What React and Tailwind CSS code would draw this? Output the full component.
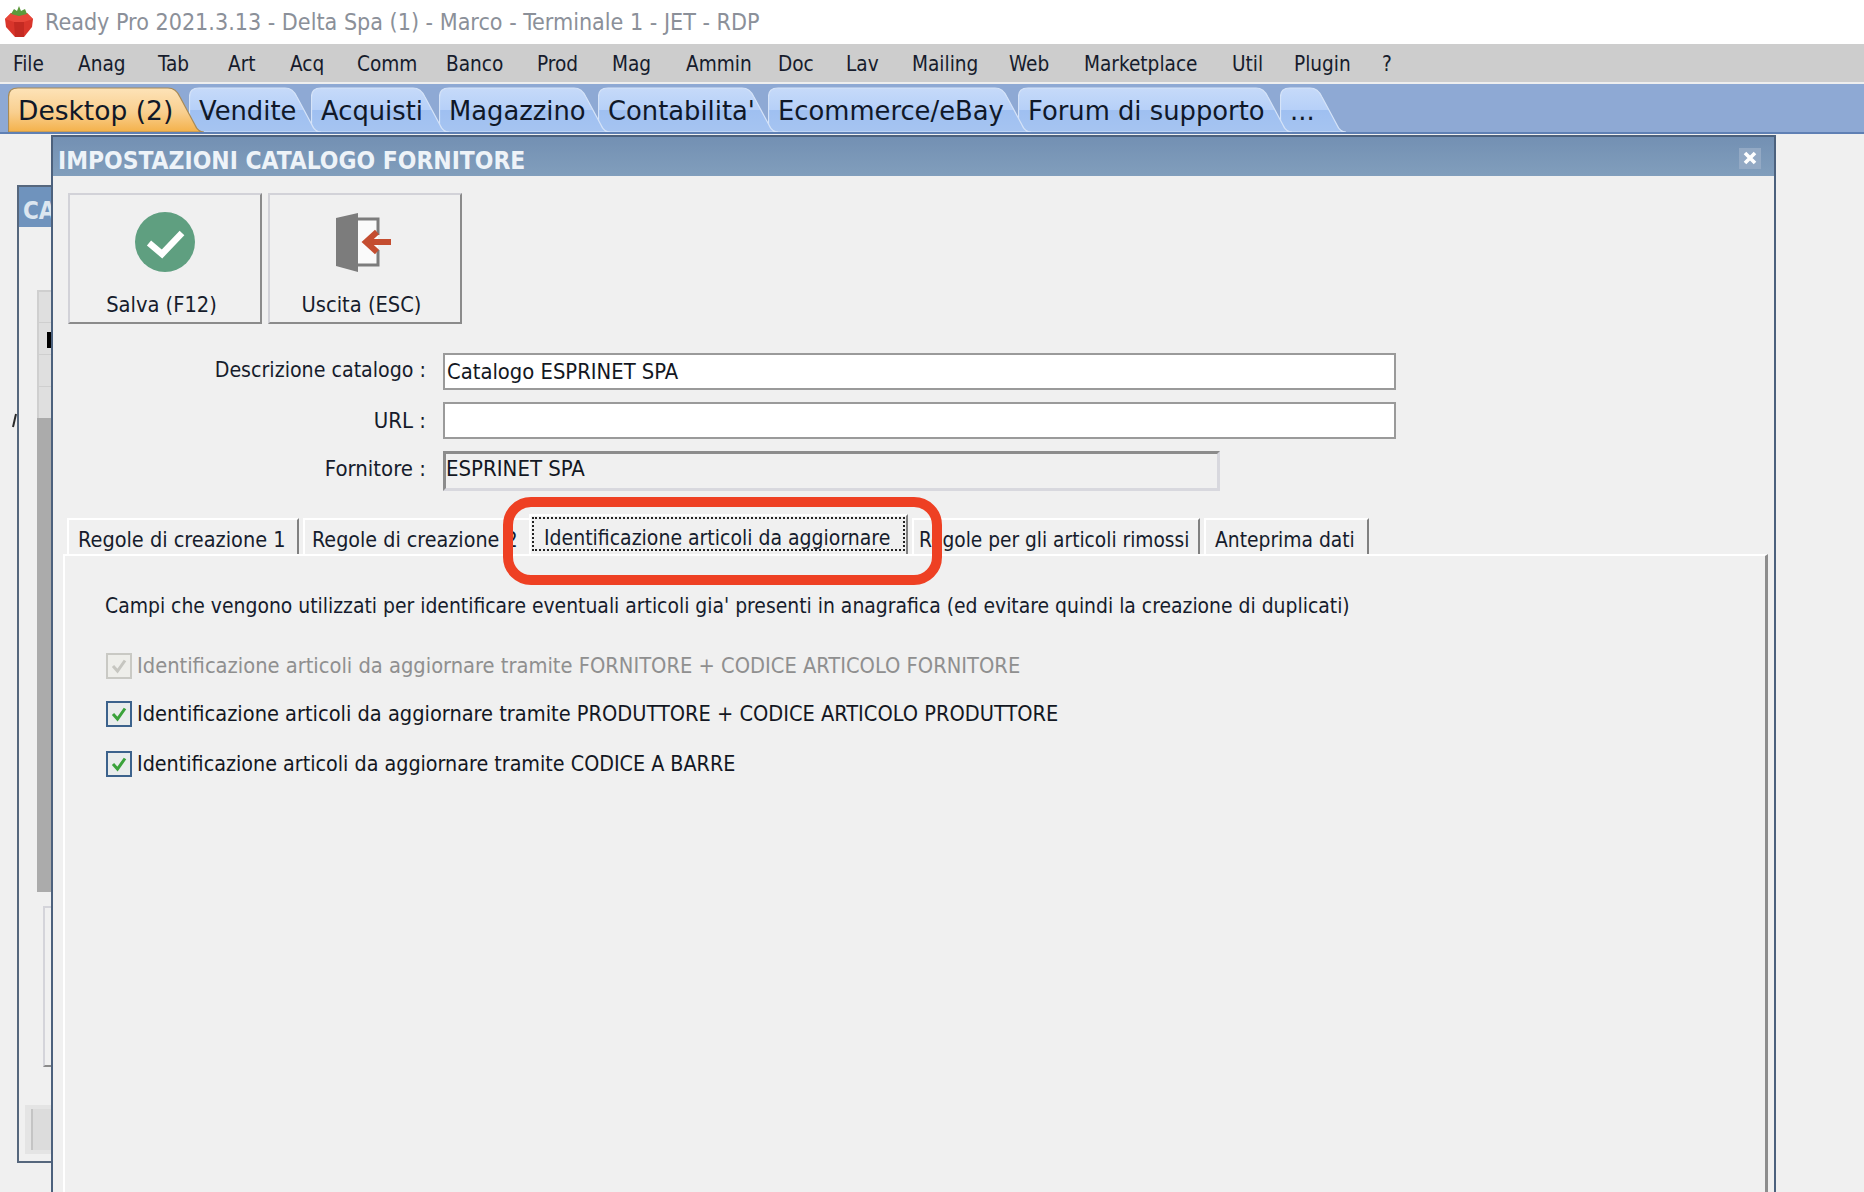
import React from 'react';

const sans = "font-['DejaVu_Sans_Condensed','DejaVu_Sans',sans-serif] font-stretch-condensed";

const menuItems = [
  { label: 'File', w: 'w-[65px]' },
  { label: 'Anag', w: 'w-[80px]' },
  { label: 'Tab', w: 'w-[70px]' },
  { label: 'Art', w: 'w-[62px]' },
  { label: 'Acq', w: 'w-[67px]' },
  { label: 'Comm', w: 'w-[89px]' },
  { label: 'Banco', w: 'w-[91px]' },
  { label: 'Prod', w: 'w-[75px]' },
  { label: 'Mag', w: 'w-[74px]' },
  { label: 'Ammin', w: 'w-[92px]' },
  { label: 'Doc', w: 'w-[68px]' },
  { label: 'Lav', w: 'w-[66px]' },
  { label: 'Mailing', w: 'w-[97px]' },
  { label: 'Web', w: 'w-[75px]' },
  { label: 'Marketplace', w: 'w-[148px]' },
  { label: 'Util', w: 'w-[62px]' },
  { label: 'Plugin', w: 'w-[88px]' },
  { label: '?', w: 'w-[20px]' },
];

// width is what the drawn shape needs, the rest stays in classes
const appTabs = [
  { label: 'Desktop (2)', width: 196, cls: 'w-[196px] ml-[8px] z-[8]', text: 'text-[26.5px]', active: true },
  { label: 'Vendite', width: 132, cls: 'w-[132px] -ml-[15px] z-[7]', text: 'text-[25.8px]' },
  { label: 'Acquisti', width: 138, cls: 'w-[138px] -ml-[10px] z-[6]', text: 'text-[25.8px]' },
  { label: 'Magazzino', width: 171, cls: 'w-[171px] -ml-[10px] z-[5]', text: 'text-[25.8px]' },
  { label: "Contabilita'", width: 180, cls: 'w-[180px] -ml-[12px] z-[4]', text: 'text-[25.8px]' },
  { label: 'Ecommerce/eBay', width: 263, cls: 'w-[263px] -ml-[10px] z-[3]', text: 'text-[25.8px]' },
  { label: 'Forum di supporto', width: 274, cls: 'w-[274px] -ml-[13px] z-[2]', text: 'text-[25.8px]' },
  { label: '...', width: 66, cls: 'w-[66px] -ml-[12px] z-[1]', text: 'text-[25.8px]' },
];

function Strawberry() {
  return (
    <svg width="30" height="33" viewBox="0 0 30 33" className="ml-[4px] mt-[1px]">
      <path d="M7 7 L23 7 L29 13 L28 21 L20 31 L11 31 L2 21 L1 13 Z" fill="#d9352b" />
      <path d="M7 7 L15 10 L23 7 L29 13 L20 16 L10 16 L1 13 Z" fill="#e8473a" />
      <path d="M10 16 L20 16 L20 31 L11 31 Z" fill="#c42a22" />
      <path d="M7 8 L10 3 L13 5 L15 0 L17 5 L21 3 L23 8 L15 10 Z" fill="#5c9a3c" />
    </svg>
  );
}

function AppTab({ tab }) {
  const w = tab.width;
  const shape = `M0.5,47 L0.5,12 Q0.5,3 10,3 L${w - 36},3 Q${w - 28},3 ${w - 24},12 L${w - 9},40 Q${w - 6},47 ${w},47 Z`;
  return (
    <div className={`relative h-[47px] pl-[10px] pt-[6px] flex items-center ${tab.cls}`}>
      <svg width={w} height="47" className="absolute left-0 top-0">
        <defs>
          <linearGradient id="tabIdle" x1="0" y1="0" x2="0" y2="1">
            <stop offset="0" stopColor="#c6daf9" />
            <stop offset="0.5" stopColor="#b6d0f8" />
            <stop offset="0.5" stopColor="#9fc0f1" />
            <stop offset="1" stopColor="#a6c4f1" />
          </linearGradient>
          <linearGradient id="tabActive" x1="0" y1="0" x2="0" y2="1">
            <stop offset="0" stopColor="#fde3b8" />
            <stop offset="0.55" stopColor="#f9cf8f" />
            <stop offset="1" stopColor="#f4b14a" />
          </linearGradient>
        </defs>
        <path
          d={shape}
          fill={tab.active ? 'url(#tabActive)' : 'url(#tabIdle)'}
          stroke={tab.active ? '#a88a56' : '#d5e3f8'}
          strokeWidth="1.2"
        />
      </svg>
      <span className={`relative font-['DejaVu_Sans',sans-serif] ${tab.text} leading-none text-[#101828] whitespace-nowrap`}>
        {tab.label}
      </span>
    </div>
  );
}

function ToolButton({ label, children }) {
  return (
    <button
      type="button"
      className="w-[194px] h-[131px] flex flex-col items-center bg-[#f0f0f0] border-2 border-t-[#d2d2d8] border-l-[#d2d2d8] border-r-[#8b8b8b] border-b-[#8b8b8b] pt-[17px]"
    >
      {children}
      <span className={`${sans} text-[21.7px] leading-[24px] mt-[21px] pr-[7px] whitespace-nowrap text-[#161c2c]`}>{label}</span>
    </button>
  );
}

function FormRow({ label, labelCls, children }) {
  return (
    <div className="flex items-center">
      <div className={`${sans} w-[373px] text-right leading-[24px] text-[#161c2c] ${labelCls}`}>{label}</div>
      <div className="ml-[17px]">{children}</div>
    </div>
  );
}

function CheckBox({ disabled }) {
  return (
    <span
      className={`w-[26px] h-[26px] shrink-0 flex items-center justify-center border-2 ${
        disabled ? 'border-[#c9c9c4] bg-[#eeeeea]' : 'border-[#3c628c] bg-[#e9ecec]'
      }`}
    >
      <svg width="18" height="18" viewBox="0 0 18 18">
        <path
          d="M3 9 L7.5 14 L15 3.5"
          fill="none"
          stroke={disabled ? '#c6c6c0' : '#3aa23a'}
          strokeWidth="3"
        />
      </svg>
    </span>
  );
}

function CheckRow({ label, disabled, cls, textCls }) {
  return (
    <div className={`flex items-center h-[26px] ml-[1px] ${cls}`}>
      <CheckBox disabled={disabled} />
      <span className={`${sans} ml-[5px] ${textCls} leading-[24px] whitespace-nowrap ${disabled ? 'text-[#8f8f8f]' : 'text-[#131722]'}`}>
        {label}
      </span>
    </div>
  );
}

function PageTab({ cls, textCls, children }) {
  return (
    <div className={`h-[36px] flex items-center pt-[5px] border-t-2 border-l-2 border-t-white border-l-white ${cls}`}>
      <span className={`${sans} ${textCls} leading-[24px] whitespace-nowrap text-[#161c2c]`}>{children}</span>
    </div>
  );
}

function BackWindow() {
  return (
    <div className="absolute left-[17px] top-[51px] w-[60px] h-[978px] border-2 border-[#56677d] bg-[#f0f0f0]">
      <div className="h-[40px] bg-[#6f93bd] pl-[4px] pt-[7px] flex items-center">
        <span className={`${sans} text-[24px] text-[#dce6f0] font-bold whitespace-nowrap`}>CA</span>
      </div>
      <div className="ml-[18px] mt-[63px]">
        <div className="h-[33px] bg-[#dfdfdf] border-2 border-b border-[#cfcfcf]" />
        <div className="h-[32px] bg-[#dfdfdf] border-l-2 border-b border-[#cfcfcf] relative">
          <div className="absolute left-[8px] top-[9px] w-[4px] h-[16px] bg-black" />
        </div>
        <div className="h-[32px] bg-[#dfdfdf] border-l-2 border-b border-[#cfcfcf]" />
        <div className="h-[31px] bg-[#dfdfdf] border-l-2 border-[#cfcfcf]" />
        <div className="h-[474px] bg-[#ababab]" />
      </div>
      <div className="ml-[24px] mt-[14px] h-[161px] border-l-2 border-t-2 border-[#d4d4da] border-b-2 border-b-[#8b8b8b]" />
      <div className="ml-[6px] mt-[38px] h-[49px] bg-[#e4e4e4] pl-[6px] py-[4px]">
        <div className="h-full bg-[#dcdcdc] border-l-2 border-[#c4c4c4]" />
      </div>
    </div>
  );
}

function Dialog() {
  return (
    <div className="absolute left-[51px] top-[1px] w-[1725px] h-[1080px] bg-[#f0f0f0] border-2 border-[#4c617d] overflow-hidden">
      {/* barra titolo */}
      <div className="h-[39px] bg-gradient-to-b from-[#7390b3] to-[#819ebc] flex items-center justify-between pl-[5px] pr-[13px]">
        <span className={`${sans} pt-[10px] text-[24.4px] font-bold leading-none text-[#eef3f8] whitespace-nowrap`}>
          IMPOSTAZIONI CATALOGO FORNITORE
        </span>
        <span className="w-[22px] h-[21px] mt-[3px] bg-[#93a9c4] flex items-center justify-center">
          <svg width="14" height="14" viewBox="0 0 14 14">
            <path d="M2 2 L12 12 M12 2 L2 12" stroke="#fff" strokeWidth="3.6" />
          </svg>
        </span>
      </div>

      <div className="flex gap-[6px] ml-[15px] mt-[17px]">
        <ToolButton label="Salva (F12)">
          <svg width="60" height="60" viewBox="0 0 60 60">
            <circle cx="30" cy="30" r="30" fill="#5f9f80" />
            <path d="M14 31 L27 42 L47 21" fill="none" stroke="#fff" strokeWidth="6.5" />
          </svg>
        </ToolButton>
        <ToolButton label="Uscita (ESC)">
          <svg width="60" height="60" viewBox="0 0 60 60" className="translate-x-[1px] translate-y-[1px]">
            <rect x="22" y="5" width="20" height="48" fill="#fafafa" />
            <path d="M0 5 L22 0 L22 59 L0 53 Z" fill="#7c7c7c" />
            <path d="M22 6 H42 V22 M42 37 V52 H22" fill="none" stroke="#7c7c7c" strokeWidth="3" />
            <path d="M30 29 H55" stroke="#c44d30" strokeWidth="6" />
            <path d="M41 19 L30 29 L41 39" fill="none" stroke="#c44d30" strokeWidth="6" />
          </svg>
        </ToolButton>
      </div>

      <div className="mt-[29px] flex flex-col gap-[12px]">
        <FormRow label="Descrizione catalogo :" labelCls="text-[21.2px] -mt-[3px]">
          <div className={`${sans} w-[953px] h-[37px] bg-white border-2 border-[#9a9a9a] pl-[2px] pt-[2px] flex items-center text-[21.8px] text-[#131722]`}>
            Catalogo ESPRINET SPA
          </div>
        </FormRow>
        <FormRow label="URL :" labelCls="text-[22px]">
          <div className="w-[953px] h-[37px] bg-white border-2 border-[#9a9a9a]" />
        </FormRow>
        <FormRow label="Fornitore :" labelCls="text-[22px] -mt-[4px]">
          <div className={`${sans} w-[777px] h-[40px] bg-[#f0f0f0] border-[3px] border-t-[#8c8c8c] border-l-[#8c8c8c] border-r-[#d8d8de] border-b-[#d8d8de] flex items-center pb-[5px] text-[22px] text-[#131722]`}>
            ESPRINET SPA
          </div>
        </FormRow>
      </div>

      {/* linguette */}
      <div className="mt-[23px] ml-[14px] h-[40px] flex items-end">
        <PageTab cls="w-[232px] pl-[9px] pr-[2px] border-r-2 border-r-[#808080] mr-[4px]" textCls="text-[21.5px]">Regole di creazione 1</PageTab>
        <PageTab cls="w-[226px] pl-[7px]" textCls="text-[21.3px]">Regole di creazione 2</PageTab>
        <div className="w-[379px] h-[40px] border-t-2 border-l-2 border-white border-r-2 border-r-[#808080] mr-[4px] pl-[1px] pt-[1px]">
          <div className={`${sans} w-[373px] h-[34px] border-2 border-dotted border-[#222] pl-[10px] flex items-center pt-[7px] text-[21px] leading-[24px] whitespace-nowrap text-[#161c2c]`}>
            Identificazione articoli da aggiornare
          </div>
        </div>
        <PageTab cls="w-[288px] pl-[5px] border-r-2 border-r-[#808080] mr-[4px]" textCls="text-[20.7px]">Regole per gli articoli rimossi</PageTab>
        <PageTab cls="w-[165px] pl-[9px] border-r-2 border-r-[#808080]" textCls="text-[20.8px]">Anteprima dati</PageTab>
      </div>

      {/* pagina */}
      <div className="ml-[10px] w-[1705px] h-[640px] border-t-2 border-l-2 border-white border-r-[3px] border-r-[#8d8d8d] pl-[40px] pt-[38px]">
        <p className={`${sans} text-[20.9px] leading-[24px] whitespace-nowrap text-[#161c2c]`}>
          Campi che vengono utilizzati per identificare eventuali articoli gia' presenti in anagrafica (ed evitare quindi la creazione di duplicati)
        </p>
        <CheckRow cls="mt-[35px]" textCls="text-[21.7px]" disabled label="Identificazione articoli da aggiornare tramite FORNITORE + CODICE ARTICOLO FORNITORE" />
        <CheckRow cls="mt-[22px]" textCls="text-[21.6px]" label="Identificazione articoli da aggiornare tramite PRODUTTORE + CODICE ARTICOLO PRODUTTORE" />
        <CheckRow cls="mt-[24px]" textCls="text-[21.3px]" label="Identificazione articoli da aggiornare tramite CODICE A BARRE" />
      </div>

      {/* cerchiatura rossa sopra la linguetta */}
      <div className="absolute left-[450px] top-[360px] w-[439px] h-[88px] border-[10px] border-[#ee4023] rounded-[28px]" />
    </div>
  );
}

export default function App() {
  return (
    <div className="w-[1864px] h-[1192px] flex flex-col bg-[#f0f0f0] overflow-hidden">
      <div className="h-[44px] bg-white flex items-center">
        <Strawberry />
        <span className={`${sans} ml-[11px] pt-[2px] text-[23.1px] leading-none text-[#8b9099] whitespace-nowrap`}>
          Ready Pro 2021.3.13 - Delta Spa (1) - Marco - Terminale 1 - JET - RDP
        </span>
      </div>

      <div className="h-[38px] bg-[#cdcdcd] flex items-center pl-[13px] pt-[2px]">
        {menuItems.map((item) => (
          <span key={item.label} className={`${sans} ${item.w} text-[20.6px] leading-none text-[#161c2c]`}>
            {item.label}
          </span>
        ))}
      </div>
      <div className="h-[2px] bg-[#eeeeee]" />

      <div className="h-[50px] bg-[#8ea9d4] border-b-2 border-[#5f80b4] flex items-end">
        {appTabs.map((tab) => (
          <AppTab key={tab.label} tab={tab} />
        ))}
      </div>

      <div className="relative flex-1">
        <svg width="6" height="16" viewBox="0 0 6 16" className="absolute left-[12px] top-[278px]">
          <path d="M1 15 L4 2" stroke="#2a2a2a" strokeWidth="2" />
        </svg>
        <BackWindow />
        <Dialog />
      </div>
    </div>
  );
}
